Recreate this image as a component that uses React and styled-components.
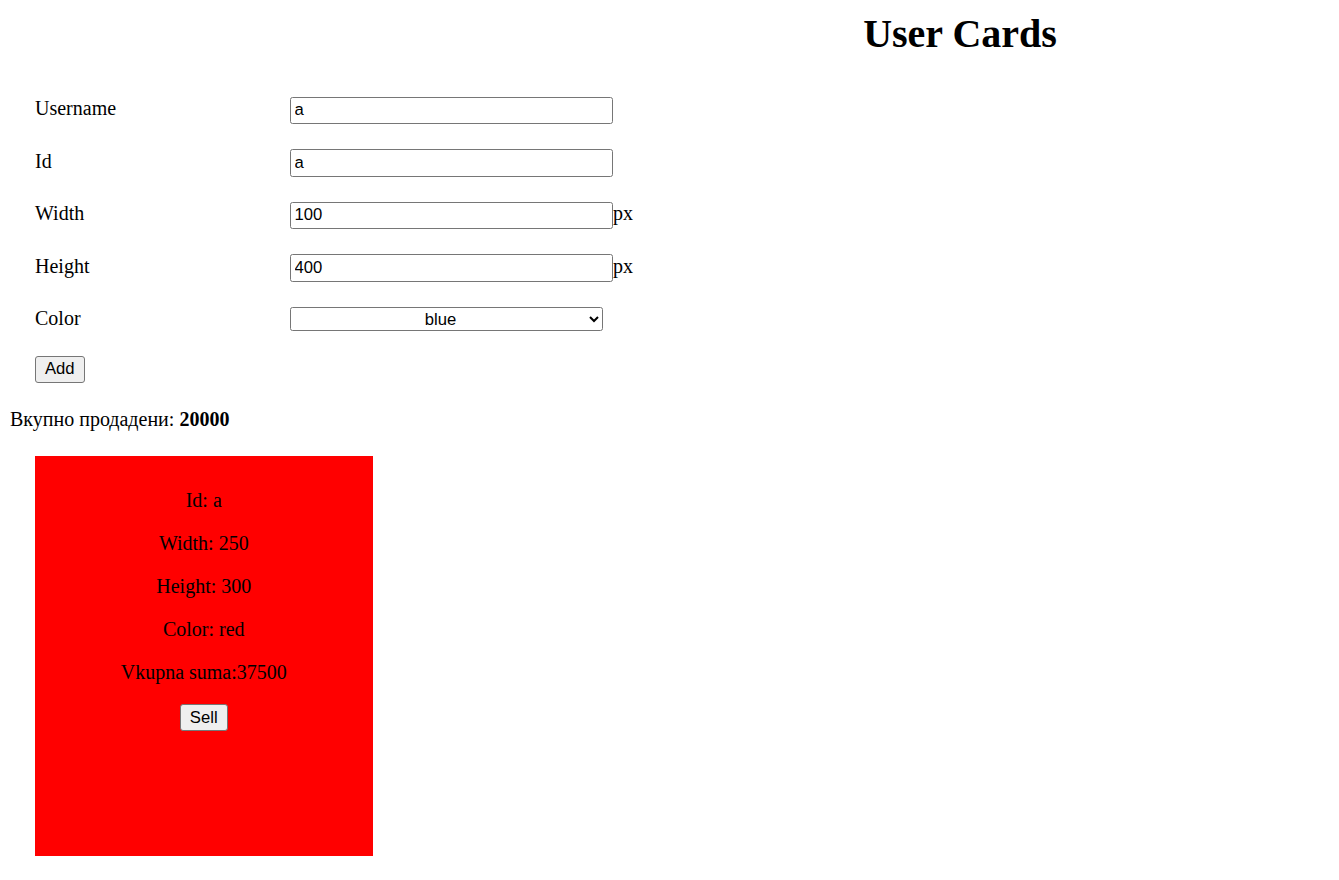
import React from "react";
import styled, { createGlobalStyle } from "styled-components";

const GlobalStyle = createGlobalStyle`
  html, body { background: #fff; }
  body {
    margin: 10px;
    font-family: "Liberation Serif", "Times New Roman", serif;
    font-size: 20px;
    color: #000;
  }
`;

const Page = styled.div`
  display: flex;
  flex-direction: column;
  align-items: flex-start;
`;

const Title = styled.h1`
  align-self: stretch;
  margin: 1px 0 0;
  padding-left: 581px;
  text-align: center;
  font-size: 40px;
  font-weight: bold;
  line-height: 46px;
`;

const Form = styled.form`
  display: flex;
  flex-direction: column;
  gap: 25px;
  margin-top: 39.5px;
  padding-left: 25px;
`;

const Row = styled.div`
  display: flex;
  align-items: baseline;
`;

const Label = styled.label`
  width: 255px;
  flex: none;
  line-height: 23px;
`;

const controlFont = `
  font-family: "Liberation Sans", Arial, sans-serif;
  font-size: 16.67px;
  color: #000;
`;

const TextInput = styled.input`
  ${controlFont}
  box-sizing: border-box;
  width: 323px;
  height: 27.5px;
  padding: 1.25px 3.5px;
  border: 1px solid #767676;
  border-radius: 2.5px;
  background: #fff;
  outline: none;
`;

const Unit = styled.span`
  line-height: 23px;
`;

const Select = styled.select`
  ${controlFont}
  box-sizing: border-box;
  width: 313px;
  height: 23.5px;
  border: 1px solid #767676;
  border-radius: 2.5px;
  background: #fff;
  text-align: center;
  text-align-last: center;
  padding: 0 2px;
`;

const Button = styled.button`
  ${controlFont}
  box-sizing: border-box;
  height: 27px;
  padding: 1.25px 9px;
  border: 1px solid #767676;
  border-radius: 3px;
  background: #efefef;
  line-height: normal;
  cursor: pointer;
`;

const Summary = styled.p`
  margin: 25px 0 0;
  line-height: 23px;
`;

const Cards = styled.div`
  display: flex;
  gap: 25px;
  margin-top: 25px;
  padding-left: 25px;
`;

const Card = styled.div`
  width: 312.5px;
  height: 374px;
  padding: 13.5px 12.5px 12.5px;
  background: ${(p) => p.$color};
  text-align: center;
`;

const CardLine = styled.p`
  margin: 20px 0;
  line-height: 23px;
`;

const fields = [
  { label: "Username", value: "a" },
  { label: "Id", value: "a" },
  { label: "Width", value: "100", unit: "px" },
  { label: "Height", value: "400", unit: "px" },
];

const cards = [{ id: "a", width: 250, height: 300, color: "red", total: 37500 }];

export default function App() {
  return (
    <>
      <GlobalStyle />
      <Page>
        <Title>User Cards</Title>
        <Form onSubmit={(e) => e.preventDefault()}>
          {fields.map((f) => (
            <Row key={f.label}>
              <Label>{f.label}</Label>
              <TextInput defaultValue={f.value} />
              {f.unit && <Unit>{f.unit}</Unit>}
            </Row>
          ))}
          <Row>
            <Label>Color</Label>
            <Select defaultValue="blue">
              <option value="red">red</option>
              <option value="blue">blue</option>
              <option value="green">green</option>
            </Select>
          </Row>
          <Row>
            <Button type="button">Add</Button>
          </Row>
        </Form>
        <Summary>
          Вкупно продадени: <b>20000</b>
        </Summary>
        <Cards>
          {cards.map((c) => (
            <Card key={c.id} $color={c.color}>
              <CardLine>Id: {c.id}</CardLine>
              <CardLine>Width: {c.width}</CardLine>
              <CardLine>Height: {c.height}</CardLine>
              <CardLine>Color: {c.color}</CardLine>
              <CardLine>Vkupna suma:{c.total}</CardLine>
              <Button type="button">Sell</Button>
            </Card>
          ))}
        </Cards>
      </Page>
    </>
  );
}
